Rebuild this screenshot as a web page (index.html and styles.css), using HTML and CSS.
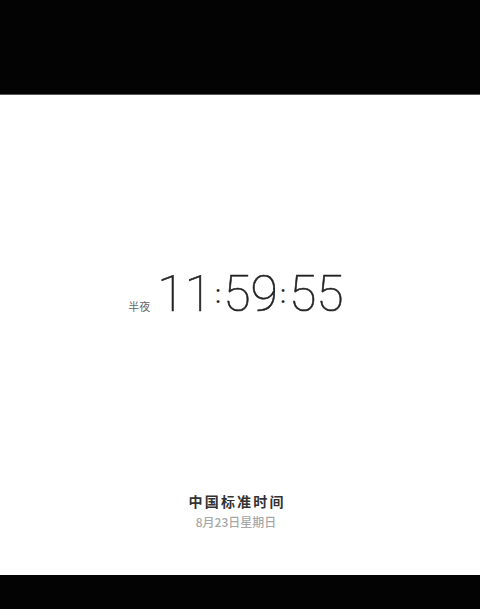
FILE: index.html
```html
<!DOCTYPE html>
<html lang="zh-CN">
<head>
<meta charset="utf-8">
<title>时钟</title>
<link rel="stylesheet" href="styles.css">
</head>
<body>
<div class="top-bar"></div>
<main class="screen">
  <div class="clock">
    <span class="period">半夜</span>
    <span class="time">11<span class="colon">:</span>59<span class="colon">:</span>55</span>
  </div>
  <div class="zone">
    <div class="zone-name">中国标准时间</div>
    <div class="zone-date">8月23日星期日</div>
  </div>
</main>
<div class="bottom-bar"></div>
</body>
</html>
```
FILE: styles.css
```css
html, body {
  margin: 0;
  padding: 0;
  background: #000;
}
body {
  width: 480px;
  height: 609px;
  display: flex;
  flex-direction: column;
  font-family: "Noto Sans CJK SC", "Noto Sans", sans-serif;
}
.top-bar {
  height: 95px;
  background: #030303;
  border-bottom: 1px solid #555;
  box-sizing: border-box;
}
.screen {
  height: 480px;
  background: #fff;
  display: flex;
  flex-direction: column;
  align-items: center;
  box-sizing: border-box;
  padding: 174px 8px 45px 0;
}
.bottom-bar {
  flex: 1;
  background: #030303;
}
.clock {
  display: flex;
  align-items: baseline;
  gap: 7px;
}
.period {
  font-size: 11px;
  line-height: 16px;
  color: #666;
}
.time {
  font-family: Roboto, "Liberation Sans", sans-serif;
  font-weight: 100;
  font-size: 50px;
  line-height: 50px;
  color: #222;
  -webkit-text-stroke: 0.6px #222;
}
.colon {
  display: inline-block;
  font-weight: 400;
  margin: 0 -0.5px;
  transform: scale(0.5);
  -webkit-text-stroke: 0;
}
.zone {
  margin-top: auto;
  display: flex;
  flex-direction: column;
  align-items: center;
}
.zone-name {
  font-size: 14px;
  line-height: 20px;
  font-weight: 700;
  color: #333;
  letter-spacing: 2.2px;
  margin-right: -2.2px;
}
.zone-date {
  margin-top: 3px;
  font-size: 12px;
  line-height: 16px;
  font-weight: 500;
  color: #a8a8a8;
}
```
